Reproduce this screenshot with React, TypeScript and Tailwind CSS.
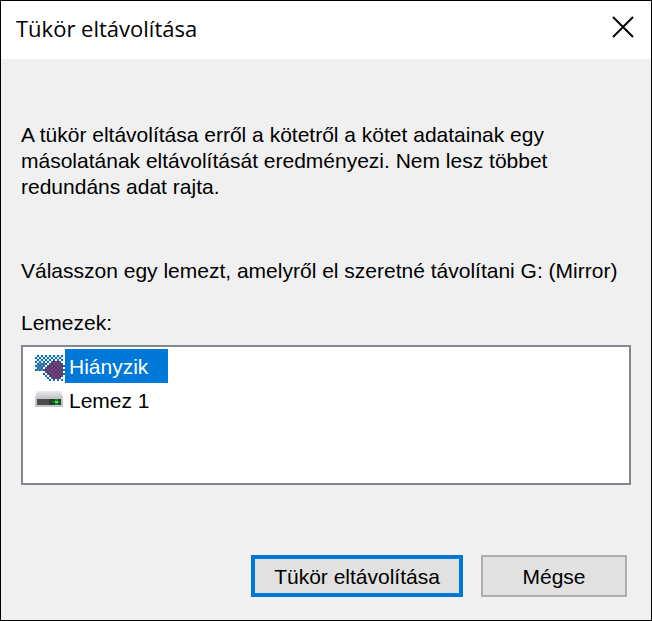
import { useState } from "react";

const MISSING_DISK = [
	".ggggggggggggg.",
	"gggggggggggggg.",
	"gggggggwwwwwwg.",
	"ggggggwwrrrrww.",
	"gddddwwrrrrrrww",
	"ddddwwrrrrrrrrw",
	"gdddwrrrrrrrrrw",
	"ddddwrrrrrrrrrw",
	"....wrrrrrrrrrw",
	"....wwrrrrrrrrw",
	".....wwrrrrrrww",
	"......wwrrrrww.",
	".......w.w.w.w.",
];

const PIXELS: Record<string, string> = {
	g: "#e3edf6",
	d: "#6f8290",
	w: "#ffffff",
	r: "#c00f24",
};

const MissingIcon = () => (
	<svg
		width="30"
		height="30"
		viewBox="0 0 15 15"
		shapeRendering="crispEdges"
		aria-hidden="true"
	>
		{MISSING_DISK.flatMap((row, y) =>
			row
				.split("")
				.map((c, x) =>
					c === "." ? null : (
						<rect
							key={`${x}-${y}`}
							x={x}
							y={y + 2}
							width="1"
							height="1"
							fill={(x + y) % 2 === 1 ? "#0c6cc2" : PIXELS[c]}
						/>
					)
				)
		)}
	</svg>
);

const DiskIcon = () => (
	<svg width="30" height="30" viewBox="0 0 30 30" aria-hidden="true">
		<defs>
			<linearGradient id="lid" x1="0" y1="0" x2="0" y2="1">
				<stop offset="0" stopColor="#e9eaec" />
				<stop offset="1" stopColor="#c3c5c8" />
			</linearGradient>
		</defs>
		<path d="M2 6h24l2 7H0z" fill="url(#lid)" />
		<path d="M0 12h28v10H0z" fill="#c4c6c8" />
		<path d="M2 14h24v6H2z" fill="#4a4c4e" />
		<path d="M14 14h12v6H14z" fill="#2e3a30" />
		<path d="M17 16h8v2h-8z" fill="#0a7d22" />
		<path d="M20 14h3v6h-3z" fill="#0a8a26" />
		<path d="M20 16h3v2h-3z" fill="#2cf04c" />
	</svg>
);

const disks = [
	{ id: "missing", label: "Hiányzik", icon: <MissingIcon /> },
	{ id: "disk1", label: "Lemez 1", icon: <DiskIcon /> },
];

const App = () => {
	const [selected, setSelected] = useState("missing");

	return (
		<main
			role="dialog"
			aria-labelledby="title"
			className="flex min-h-screen flex-col border border-black bg-[#f0f0f0] font-['Liberation_Sans',Arial,sans-serif] text-[21px] leading-[26px] text-black"
		>
			<header className="flex h-[58px] items-center justify-between bg-white px-[15px]">
				<h1
					id="title"
					className="-mt-1 font-['Open_Sans','Noto_Sans',sans-serif] text-[22px]"
				>
					Tükör eltávolítása
				</h1>
				<button type="button" aria-label="Bezárás" className="-mt-1.5 p-0.5">
					<svg
						width="22"
						height="22"
						viewBox="0 0 22 22"
						stroke="#000"
						strokeWidth="2"
						aria-hidden="true"
					>
						<path d="M1 1l20 20M21 1L1 21" />
					</svg>
				</button>
			</header>

			<div className="flex grow flex-col px-5 pt-[63px] pb-[23px]">
				<p className="max-w-[540px]">
					A tükör eltávolítása erről a kötetről a kötet adatainak egy
					másolatának eltávolítását eredményezi. Nem lesz többet redundáns adat
					rajta.
				</p>
				<p className="mt-[58px] whitespace-nowrap">
					Válasszon egy lemezt, amelyről el szeretné távolítani G: (Mirror)
				</p>

				<fieldset className="mt-[26px]">
					<legend>Lemezek:</legend>
					<div className="mt-[9px] h-[140px] border-2 border-[#828790] bg-white px-3 py-0.5">
						{disks.map((disk) => (
							<label key={disk.id} className="flex h-[34px] w-fit items-center">
								<input
									type="radio"
									name="disk"
									className="peer sr-only"
									checked={selected === disk.id}
									onChange={() => setSelected(disk.id)}
								/>
								{disk.icon}
								<span className="flex h-full items-center pt-0.5 pr-5 pl-1 peer-checked:bg-[#0078d7] peer-checked:text-white">
									{disk.label}
								</span>
							</label>
						))}
					</div>
				</fieldset>

				<div className="mt-auto flex justify-end gap-[18px] pr-1">
					<button
						type="button"
						className="h-[42px] w-[212px] border-4 border-[#0078d7] bg-[#e1e1e1] pt-0.5 whitespace-nowrap"
					>
						Tükör eltávolítása
					</button>
					<button
						type="button"
						className="h-[42px] w-[146px] border-2 border-[#adadad] bg-[#e1e1e1] pt-0.5"
					>
						Mégse
					</button>
				</div>
			</div>
		</main>
	);
};

export default App;
